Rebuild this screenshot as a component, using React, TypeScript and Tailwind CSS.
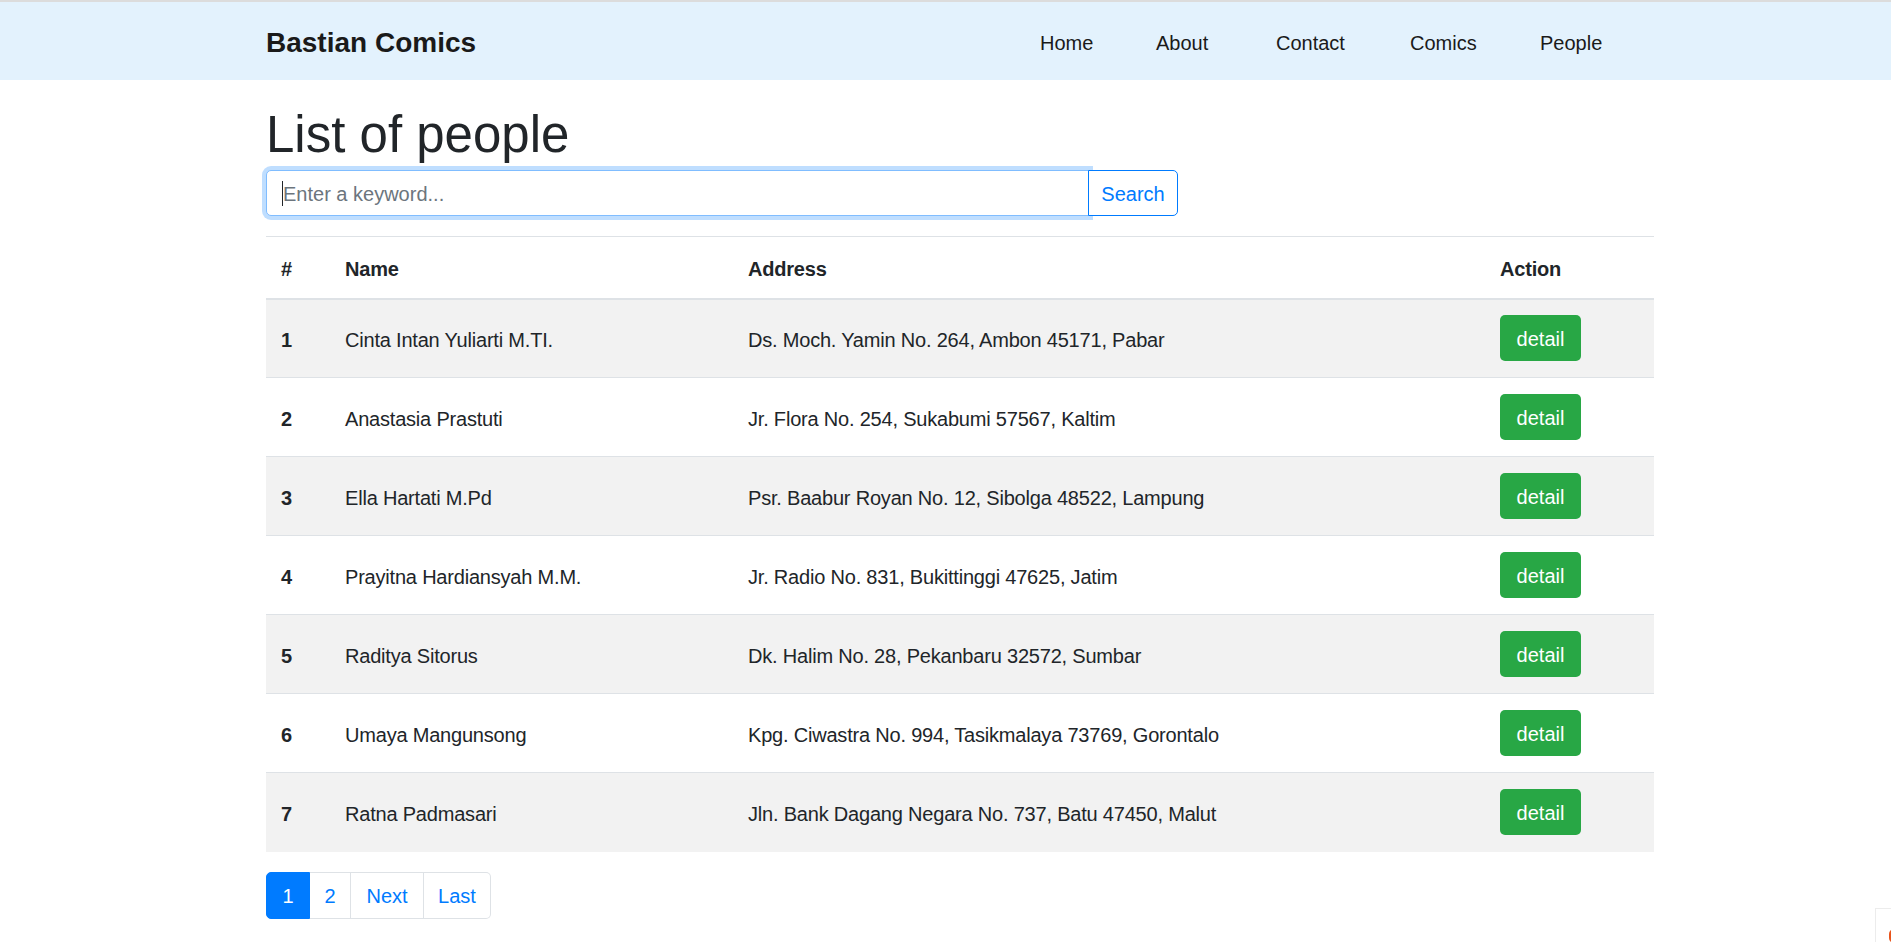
import React from "react";

const people = [
  { name: "Cinta Intan Yuliarti M.TI.", address: "Ds. Moch. Yamin No. 264, Ambon 45171, Pabar" },
  { name: "Anastasia Prastuti", address: "Jr. Flora No. 254, Sukabumi 57567, Kaltim" },
  { name: "Ella Hartati M.Pd", address: "Psr. Baabur Royan No. 12, Sibolga 48522, Lampung" },
  { name: "Prayitna Hardiansyah M.M.", address: "Jr. Radio No. 831, Bukittinggi 47625, Jatim" },
  { name: "Raditya Sitorus", address: "Dk. Halim No. 28, Pekanbaru 32572, Sumbar" },
  { name: "Umaya Mangunsong", address: "Kpg. Ciwastra No. 994, Tasikmalaya 73769, Gorontalo" },
  { name: "Ratna Padmasari", address: "Jln. Bank Dagang Negara No. 737, Batu 47450, Malut" },
];

const links = [
  { label: "Home", w: "w-[116px]" },
  { label: "About", w: "w-[120px]" },
  { label: "Contact", w: "w-[134px]" },
  { label: "Comics", w: "w-[130px]" },
  { label: "People", w: "w-[66px]" },
];

export default function App() {
  return (
    <div
      className="relative min-h-screen bg-white text-[#212529]"
      style={{ fontFamily: '"Liberation Sans", Arial, sans-serif' }}
    >
      <nav className="h-[80px] border-t-2 border-[#dcdcdc] bg-[#e3f2fd] pl-[266px]">
        <div className="flex h-full w-[1388px] items-center justify-between pt-[4px]">
          <a className="text-[28px] font-bold leading-none text-[#1a1a1a]">Bastian Comics</a>
          <ul className="mr-[48px] flex items-center">
            {links.map((l) => (
              <li key={l.label} className={`${l.w} text-[20px] text-[#1a1a1a]`}>
                {l.label}
              </li>
            ))}
          </ul>
        </div>
      </nav>

      <main className="ml-[266px] w-[1388px]">
        <h1 className="mt-[23px] text-[51px] font-medium leading-[1.24]">List of people</h1>

        <form className="mt-[4px] mb-[20px] flex h-[46px] w-[912px]">
          <div className="relative flex-1">
            <input
              className="h-full w-full rounded-l-[5px] border border-[#80bdff] bg-white px-[16px] pt-[2px] text-[20px] text-[#495057] shadow-[0_0_0_4px_rgba(0,123,255,0.25)] outline-none placeholder:text-[#6c757d]"
              placeholder="Enter a keyword..."
            />
            <span className="absolute left-[16px] top-[11px] h-[25px] w-px bg-[#212529]" />
          </div>
          <button
            type="button"
            className="relative -ml-px w-[90px] rounded-r-[5px] border border-[#007bff] bg-white pt-[2px] text-[20px] text-[#007bff]"
          >
            Search
          </button>
        </form>

        <table className="w-full border-collapse text-[20px] tracking-[-0.2px]">
          <thead>
            <tr className="h-[62px] border-t border-b-2 border-[#dee2e6] text-left font-bold">
              <th className="w-[64px] px-[15px] pt-[4px]">#</th>
              <th className="w-[403px] px-[15px] pt-[4px]">Name</th>
              <th className="w-[752px] px-[15px] pt-[4px]">Address</th>
              <th className="px-[15px] pt-[4px]">Action</th>
            </tr>
          </thead>
          <tbody>
            {people.map((p, i) => (
              <tr
                key={i}
                className={`h-[79px] border-t border-[#dee2e6] ${i % 2 === 0 ? "bg-[#f2f2f2]" : "bg-white"}`}
              >
                <th className="px-[15px] pt-[4px] text-left font-bold">{i + 1}</th>
                <td className="px-[15px] pt-[4px]">{p.name}</td>
                <td className="px-[15px] pt-[4px]">{p.address}</td>
                <td className="px-[15px]">
                  <button
                    type="button"
                    className="h-[46px] w-[81px] rounded-[5px] bg-[#28a745] pt-[2px] text-[20px] tracking-normal text-white"
                  >
                    detail
                  </button>
                </td>
              </tr>
            ))}
          </tbody>
        </table>

        <ul className="mt-[20px] flex h-[47px] text-[20px]">
          <li className="flex w-[44px] items-center justify-center rounded-l-[5px] border border-[#007bff] bg-[#007bff] pt-[2px] text-white">
            1
          </li>
          <li className="flex w-[41px] items-center justify-center border border-l-0 border-[#dee2e6] pt-[2px] text-[#007bff]">
            2
          </li>
          <li className="flex w-[73px] items-center justify-center border border-l-0 border-[#dee2e6] pt-[2px] text-[#007bff]">
            Next
          </li>
          <li className="flex w-[67px] items-center justify-center rounded-r-[5px] border border-l-0 border-[#dee2e6] pt-[2px] text-[#007bff]">
            Last
          </li>
        </ul>
      </main>

      <div className="absolute right-0 bottom-0 h-[34px] w-[16px] overflow-hidden border-t border-l border-[#ececec] bg-white">
        <span className="absolute top-[20px] left-[13px] h-[14px] w-[10px] rounded-full bg-[#e8541c]" />
      </div>
    </div>
  );
}
